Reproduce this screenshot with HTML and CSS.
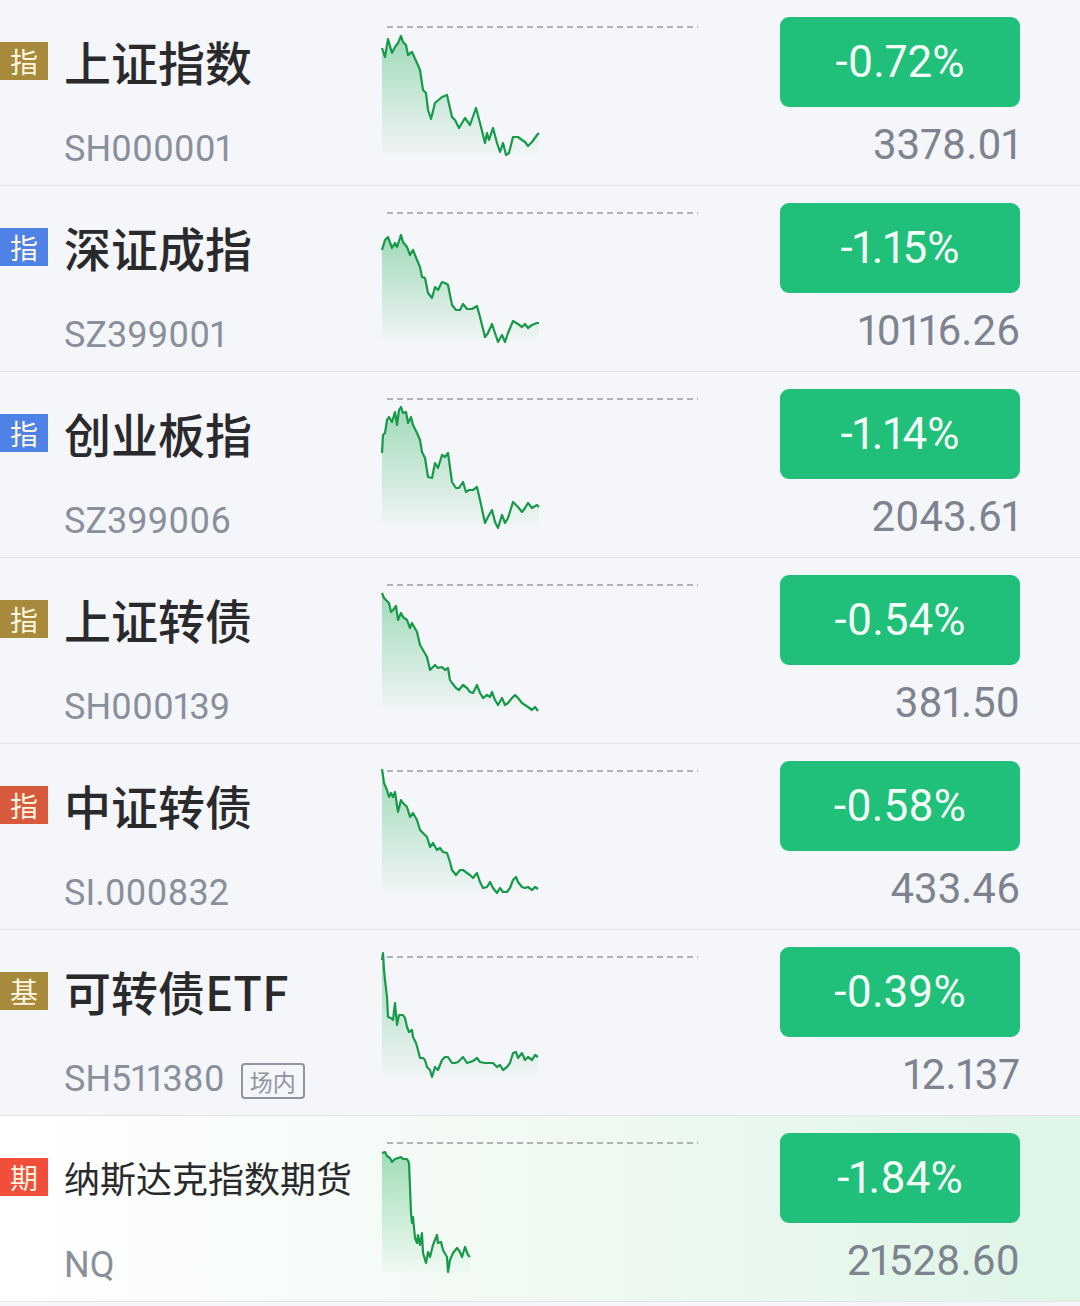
FILE: index.html
```html
<!DOCTYPE html>
<html lang="zh-CN">
<head>
<meta charset="utf-8">
<title>指数行情</title>
<link rel="stylesheet" href="styles.css">
</head>
<body>
<svg class="defs" width="0" height="0" aria-hidden="true">
  <defs>
    <linearGradient id="fillGreen" x1="0" y1="0" x2="0" y2="1">
      <stop offset="0" stop-color="#2bb45c" stop-opacity="0.42"/>
      <stop offset="1" stop-color="#2bb45c" stop-opacity="0.02"/>
    </linearGradient>
  </defs>
</svg>
<div class="list">

  <div class="row">
    <div class="info">
      <div class="name-line"><span class="badge gold">指</span><span class="name">上证指数</span></div>
      <div class="code-line"><span class="code">SH000001</span></div>
    </div>
    <svg class="chart" viewBox="0 0 318 185" width="318" height="185">
      <line class="base" x1="5" y1="27" x2="316" y2="27"/>
      <polygon class="area" points="0,48 3,57 6,39 10,53 13,47 16,43 19,36 21,42 24,45 26,55 30,52 35,63 38,70 41,90 44,93 46,110 49,119 53,103 60,97 65,95 70,117 73,120 77,128 83,118 88,125 94,108 98,123 103,143 105,133 107,140 111,128 115,143 118,152 121,143 124,155 127,153 131,137 136,137 140,140 143,142 146,146 150,142 155,135 157,133 157,155 0,155"/>
      <polyline class="line" points="0,48 3,57 6,39 10,53 13,47 16,43 19,36 21,42 24,45 26,55 30,52 35,63 38,70 41,90 44,93 46,110 49,119 53,103 60,97 65,95 70,117 73,120 77,128 83,118 88,125 94,108 98,123 103,143 105,133 107,140 111,128 115,143 118,152 121,143 124,155 127,153 131,137 136,137 140,140 143,142 146,146 150,142 155,135 157,133"/>
    </svg>
    <div class="quote">
      <div class="change">-0.72%</div>
      <div class="price">3378.01</div>
    </div>
  </div>

  <div class="row">
    <div class="info">
      <div class="name-line"><span class="badge blue">指</span><span class="name">深证成指</span></div>
      <div class="code-line"><span class="code">SZ399001</span></div>
    </div>
    <svg class="chart" viewBox="0 0 318 185" width="318" height="185">
      <line class="base" x1="5" y1="27" x2="316" y2="27"/>
      <polygon class="area" points="0,64 3,54 6,51 10,62 13,57 15,61 19,49 21,56 25,61 28,69 31,64 35,74 38,81 40,91 43,92 46,107 50,112 53,101 56,104 60,96 63,97 66,99 70,119 74,124 78,124 81,118 85,123 90,123 95,120 98,131 103,151 106,147 110,138 113,147 116,156 120,149 123,156 126,147 131,135 136,138 140,141 143,138 146,142 150,139 155,137 157,137 157,153 0,153"/>
      <polyline class="line" points="0,64 3,54 6,51 10,62 13,57 15,61 19,49 21,56 25,61 28,69 31,64 35,74 38,81 40,91 43,92 46,107 50,112 53,101 56,104 60,96 63,97 66,99 70,119 74,124 78,124 81,118 85,123 90,123 95,120 98,131 103,151 106,147 110,138 113,147 116,156 120,149 123,156 126,147 131,135 136,138 140,141 143,138 146,142 150,139 155,137 157,137"/>
    </svg>
    <div class="quote">
      <div class="change">-1.15%</div>
      <div class="price">10116.26</div>
    </div>
  </div>

  <div class="row">
    <div class="info">
      <div class="name-line"><span class="badge blue">指</span><span class="name">创业板指</span></div>
      <div class="code-line"><span class="code">SZ399006</span></div>
    </div>
    <svg class="chart" viewBox="0 0 318 185" width="318" height="185">
      <line class="base" x1="5" y1="27" x2="316" y2="27"/>
      <polygon class="area" points="0,81 1,63 3,61 5,48 7,45 10,50 13,40 15,53 17,38 19,35 21,41 24,40 26,51 29,45 31,53 35,61 38,68 40,80 43,86 46,105 50,106 53,91 56,96 60,83 63,85 66,81 70,110 74,116 77,116 81,110 84,120 87,118 91,118 95,115 98,128 103,151 106,145 110,138 113,150 116,156 120,143 123,151 126,146 131,130 136,135 140,140 143,136 146,131 150,136 155,133 157,135 157,153 0,153"/>
      <polyline class="line" points="0,81 1,63 3,61 5,48 7,45 10,50 13,40 15,53 17,38 19,35 21,41 24,40 26,51 29,45 31,53 35,61 38,68 40,80 43,86 46,105 50,106 53,91 56,96 60,83 63,85 66,81 70,110 74,116 77,116 81,110 84,120 87,118 91,118 95,115 98,128 103,151 106,145 110,138 113,150 116,156 120,143 123,151 126,146 131,130 136,135 140,140 143,136 146,131 150,136 155,133 157,135"/>
    </svg>
    <div class="quote">
      <div class="change">-1.14%</div>
      <div class="price">2043.61</div>
    </div>
  </div>

  <div class="row">
    <div class="info">
      <div class="name-line"><span class="badge gold">指</span><span class="name">上证转债</span></div>
      <div class="code-line"><span class="code">SH000139</span></div>
    </div>
    <svg class="chart" viewBox="0 0 318 185" width="318" height="185">
      <line class="base" x1="5" y1="27" x2="316" y2="27"/>
      <polygon class="area" points="0,35 2,40 5,43 7,45 9,54 11,52 14,48 16,62 19,55 21,59 25,62 28,70 30,65 35,74 38,87 41,92 45,99 48,112 50,110 53,107 56,110 60,109 63,112 66,110 68,122 70,125 74,130 77,132 81,127 85,130 88,134 91,135 95,127 98,135 101,140 105,137 108,139 110,134 113,142 116,147 120,140 123,147 126,145 130,140 133,137 136,140 140,145 143,147 146,149 150,152 153,149 156,153 156,152 0,152"/>
      <polyline class="line" points="0,35 2,40 5,43 7,45 9,54 11,52 14,48 16,62 19,55 21,59 25,62 28,70 30,65 35,74 38,87 41,92 45,99 48,112 50,110 53,107 56,110 60,109 63,112 66,110 68,122 70,125 74,130 77,132 81,127 85,130 88,134 91,135 95,127 98,135 101,140 105,137 108,139 110,134 113,142 116,147 120,140 123,147 126,145 130,140 133,137 136,140 140,145 143,147 146,149 150,152 153,149 156,153"/>
    </svg>
    <div class="quote">
      <div class="change">-0.54%</div>
      <div class="price">381.50</div>
    </div>
  </div>

  <div class="row">
    <div class="info">
      <div class="name-line"><span class="badge red">指</span><span class="name">中证转债</span></div>
      <div class="code-line"><span class="code">SI.000832</span></div>
    </div>
    <svg class="chart" viewBox="0 0 318 185" width="318" height="185">
      <line class="base" x1="5" y1="27" x2="316" y2="27"/>
      <polygon class="area" points="0,25 2,39 5,46 7,53 9,49 11,53 13,48 16,68 19,56 21,59 25,63 28,73 31,69 35,76 38,86 41,89 45,93 48,103 51,99 55,106 58,104 61,108 65,109 68,118 70,126 74,131 78,126 81,126 85,129 88,131 91,134 95,129 98,138 101,144 105,143 108,138 111,144 115,149 118,144 121,148 125,148 128,144 131,136 134,133 136,138 140,143 143,144 146,143 150,146 153,143 156,145 156,149 0,149"/>
      <polyline class="line" points="0,25 2,39 5,46 7,53 9,49 11,53 13,48 16,68 19,56 21,59 25,63 28,73 31,69 35,76 38,86 41,89 45,93 48,103 51,99 55,106 58,104 61,108 65,109 68,118 70,126 74,131 78,126 81,126 85,129 88,131 91,134 95,129 98,138 101,144 105,143 108,138 111,144 115,149 118,144 121,148 125,148 128,144 131,136 134,133 136,138 140,143 143,144 146,143 150,146 153,143 156,145"/>
    </svg>
    <div class="quote">
      <div class="change">-0.58%</div>
      <div class="price">433.46</div>
    </div>
  </div>

  <div class="row">
    <div class="info">
      <div class="name-line"><span class="badge gold">基</span><span class="name">可转债ETF</span></div>
      <div class="code-line"><span class="code">SH511380</span><span class="tag">场内</span></div>
    </div>
    <svg class="chart" viewBox="0 0 318 185" width="318" height="185">
      <line class="base" x1="5" y1="27" x2="316" y2="27"/>
      <polygon class="area" points="0,30 1,23 2,40 3,50 5,67 6,87 9,88 11,90 13,73 15,95 17,85 21,85 23,88 25,97 27,102 30,100 31,107 34,113 36,120 38,128 41,128 43,130 45,137 48,140 50,147 53,137 56,140 60,130 63,127 66,127 70,133 73,133 76,132 81,127 85,133 88,132 91,131 95,128 98,132 103,133 108,133 111,133 115,137 118,135 121,140 125,137 128,133 131,123 134,122 136,128 140,123 143,130 146,127 150,130 153,125 156,127 156,147 0,147"/>
      <polyline class="line" points="0,30 1,23 2,40 3,50 5,67 6,87 9,88 11,90 13,73 15,95 17,85 21,85 23,88 25,97 27,102 30,100 31,107 34,113 36,120 38,128 41,128 43,130 45,137 48,140 50,147 53,137 56,140 60,130 63,127 66,127 70,133 73,133 76,132 81,127 85,133 88,132 91,131 95,128 98,132 103,133 108,133 111,133 115,137 118,135 121,140 125,137 128,133 131,123 134,122 136,128 140,123 143,130 146,127 150,130 153,125 156,127"/>
    </svg>
    <div class="quote">
      <div class="change">-0.39%</div>
      <div class="price">12.137</div>
    </div>
  </div>

  <div class="row highlight">
    <div class="info">
      <div class="name-line"><span class="badge orange">期</span><span class="name small">纳斯达克指数期货</span></div>
      <div class="code-line"><span class="code">NQ</span></div>
    </div>
    <svg class="chart" viewBox="0 0 318 185" width="318" height="185">
      <line class="base" x1="5" y1="27" x2="316" y2="27"/>
      <polygon class="area" points="0,37 3,36 5,40 8,42 10,46 13,43 16,42 19,41 21,43 25,43 27,47 28,71 29,97 30,107 31,101 33,122 35,127 36,119 38,129 40,117 41,137 44,147 46,136 48,141 51,129 55,119 56,127 59,126 61,134 65,141 66,156 68,144 71,137 75,132 78,136 80,141 83,131 86,139 88,141 88,156 0,156"/>
      <polyline class="line" points="0,37 3,36 5,40 8,42 10,46 13,43 16,42 19,41 21,43 25,43 27,47 28,71 29,97 30,107 31,101 33,122 35,127 36,119 38,129 40,117 41,137 44,147 46,136 48,141 51,129 55,119 56,127 59,126 61,134 65,141 66,156 68,144 71,137 75,132 78,136 80,141 83,131 86,139 88,141"/>
    </svg>
    <div class="quote">
      <div class="change">-1.84%</div>
      <div class="price">21528.60</div>
    </div>
  </div>

</div>
</body>
</html>
```

FILE: styles.css
```css
html, body {
  margin: 0;
  padding: 0;
  background: #f5f6fa;
}

body {
  font-family: Roboto, "Noto Sans CJK SC", "Noto Sans", sans-serif;
  font-variant-numeric: proportional-nums;
  width: 1080px;
}

.defs {
  display: block;
  width: 0;
  height: 0;
  overflow: hidden;
}

.list {
  display: flex;
  flex-direction: column;
}

.row {
  display: grid;
  grid-template-columns: 382px 318px 80px 240px 60px;
  height: 185px;
  border-bottom: 1px solid #e3e5ea;
}

.row.highlight {
  background: linear-gradient(90deg, #ffffff 0%, #f2faf4 45%, #def5e6 100%);
}

.info {
  display: flex;
  flex-direction: column;
  padding-top: 31px;
}

.name-line {
  display: flex;
  align-items: center;
  height: 60px;
  gap: 16px;
}

.badge {
  display: flex;
  align-items: center;
  justify-content: center;
  width: 48px;
  height: 38px;
  font-family: "Noto Sans CJK SC", sans-serif;
  font-size: 28px;
  line-height: 1;
  color: #fff7e0;
}

.badge.gold { background: #a88a3c; }
.badge.blue { background: #4e82e6; }
.badge.red { background: #d65a3b; }
.badge.orange { background: #f24e3c; }

.name {
  font-family: "Noto Sans CJK SC", sans-serif;
  font-size: 47px;
  font-weight: 500;
  line-height: 60px;
  color: #2a2a2c;
  white-space: nowrap;
}

.name.small {
  font-size: 36px;
  font-weight: 400;
}

.code-line {
  display: flex;
  align-items: center;
  gap: 16px;
  margin-top: 38px;
  padding-left: 64px;
  height: 40px;
}

.code {
  font-size: 36px;
  line-height: 40px;
  color: #8a8f9c;
}

.tag {
  display: flex;
  align-items: center;
  justify-content: center;
  width: 60px;
  height: 32px;
  border: 2px solid #8f94a0;
  border-radius: 4px;
  font-family: "Noto Sans CJK SC", sans-serif;
  font-size: 23px;
  line-height: 1;
  color: #8f94a0;
  margin-top: 4px;
}

.chart {
  grid-column: 2;
  display: block;
  overflow: visible;
}

.chart .base {
  stroke: #9b9ca0;
  stroke-width: 1.6;
  stroke-dasharray: 6 4;
}

.chart .area {
  fill: url(#fillGreen);
  stroke: none;
}

.chart .line {
  fill: none;
  stroke: #17994a;
  stroke-width: 2.2;
  stroke-linejoin: round;
}

.quote {
  grid-column: 4;
  display: flex;
  flex-direction: column;
  align-items: stretch;
  padding-top: 17px;
}

.change {
  display: flex;
  align-items: center;
  justify-content: center;
  height: 90px;
  border-radius: 9px;
  background: #20bf7a;
  color: #f4fff8;
  font-size: 44px;
  line-height: 1;
}

.price {
  margin-top: 16px;
  text-align: right;
  font-size: 42px;
  line-height: 44px;
  color: #7e8390;
}
```
